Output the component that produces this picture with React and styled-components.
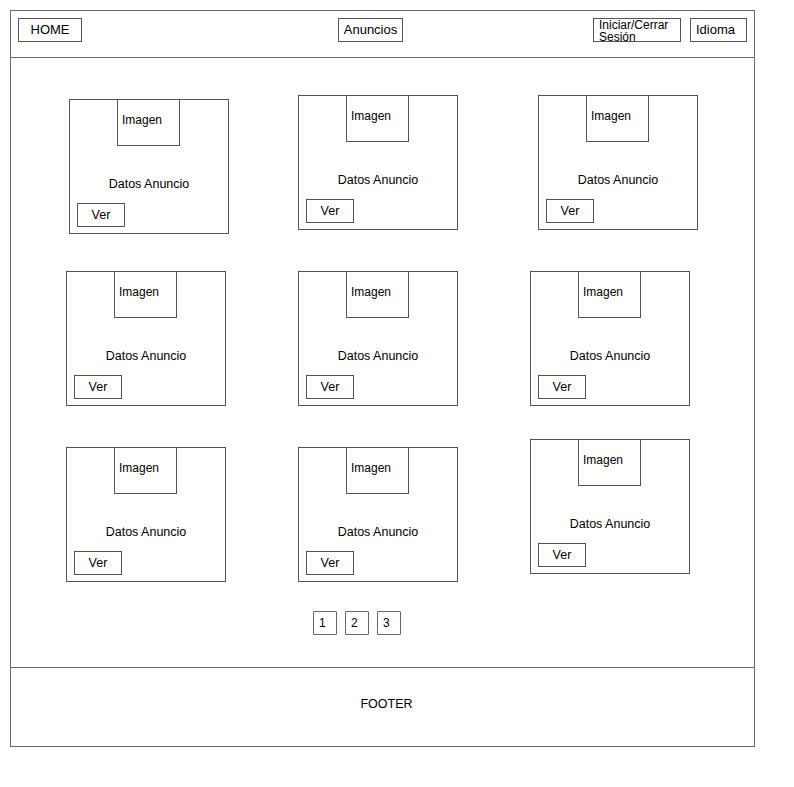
import React from 'react';
import styled, { createGlobalStyle } from 'styled-components';

const GlobalStyle = createGlobalStyle`
  html, body {
    margin: 0;
    padding: 0;
    background: #ffffff;
  }
  body {
    font-family: 'Liberation Sans', Arial, sans-serif;
    color: #000;
  }
  * { box-sizing: border-box; }
`;

const Frame = styled.div`
  margin: 10px 0 0 10px;
  width: 745px;
  height: 737px;
  border: 1px solid #6a6a6a;
  display: flex;
  flex-direction: column;
`;

const Header = styled.header`
  height: 47px;
  border-bottom: 1px solid #6a6a6a;
  display: flex;
  align-items: flex-start;
  padding: 7px 7px 0 7px;
`;

const NavButton = styled.div`
  height: 24px;
  width: ${p => p.$w}px;
  margin-left: ${p => p.$ml || 0}px;
  border: 1px solid #555;
  font-size: 13px;
  line-height: 22px;
  text-align: ${p => (p.$left ? 'left' : 'center')};
  padding: ${p => (p.$left ? '0 5px' : '0')};
`;

const StackedLabel = styled(NavButton)`
  font-size: 12px;
  line-height: 12px;
  padding: 0 5px;
  text-align: left;
`;

const RightGroup = styled.div`
  margin-left: auto;
  display: flex;
  gap: 9px;
`;

const Main = styled.main`
  flex: 1;
  display: flex;
  flex-direction: column;
  padding: 37px 0 0 55px;
`;

const Grid = styled.div`
  display: grid;
  grid-template-columns: repeat(3, 160px);
  grid-auto-rows: 135px;
  column-gap: 72px;
  row-gap: 41px;
`;

const Card = styled.div`
  width: 160px;
  height: 135px;
  border: 1px solid #555;
  display: flex;
  flex-direction: column;
  align-items: center;
  transform: translate(${p => p.$dx || 0}px, ${p => p.$dy || 0}px);
`;

const ImageBox = styled.div`
  width: 63px;
  height: 47px;
  margin: -1px 1px 0 0;
  border: 1px solid #555;
  font-size: 12px;
  line-height: 14px;
  padding: 13px 0 0 4px;
`;

const Datos = styled.div`
  margin-top: 31px;
  font-size: 12.5px;
  line-height: 14px;
`;

const VerButton = styled.div`
  align-self: flex-start;
  margin: auto 0 6px 7px;
  width: 48px;
  height: 24px;
  border: 1px solid #555;
  font-size: 12.5px;
  line-height: 22px;
  text-align: center;
`;

const Pager = styled.div`
  display: flex;
  gap: 8px;
  margin: 29px 0 0 247px;
`;

const PageBox = styled.div`
  width: 24px;
  height: 24px;
  border: 1px solid #666;
  border-radius: 1px;
  font-size: 12px;
  line-height: 22px;
  padding-left: 5px;
`;

const Footer = styled.footer`
  height: 79px;
  border-top: 1px solid #6a6a6a;
  display: flex;
  align-items: center;
  justify-content: center;
  font-size: 12.5px;
  padding-left: 8px;
  padding-bottom: 6px;
`;

const cards = [
  { dx: 3, dy: 4 }, {}, { dx: 8 },
  {}, {}, {},
  {}, {}, { dy: -8 },
];

const AdCard = ({ dx, dy }) => (
  <Card $dx={dx} $dy={dy}>
    <ImageBox>Imagen</ImageBox>
    <Datos>Datos Anuncio</Datos>
    <VerButton>Ver</VerButton>
  </Card>
);

export default function App() {
  return (
    <>
      <GlobalStyle />
      <Frame>
        <Header>
          <NavButton $w={64}>HOME</NavButton>
          <NavButton $w={65} $ml={256}>Anuncios</NavButton>
          <RightGroup>
            <StackedLabel $w={88}>Iniciar/Cerrar<br />Sesión</StackedLabel>
            <NavButton $w={57} $left>Idioma</NavButton>
          </RightGroup>
        </Header>
        <Main>
          <Grid>
            {cards.map((c, i) => (
              <AdCard key={i} dx={c.dx} dy={c.dy} />
            ))}
          </Grid>
          <Pager>
            <PageBox>1</PageBox>
            <PageBox>2</PageBox>
            <PageBox>3</PageBox>
          </Pager>
        </Main>
        <Footer>FOOTER</Footer>
      </Frame>
    </>
  );
}
